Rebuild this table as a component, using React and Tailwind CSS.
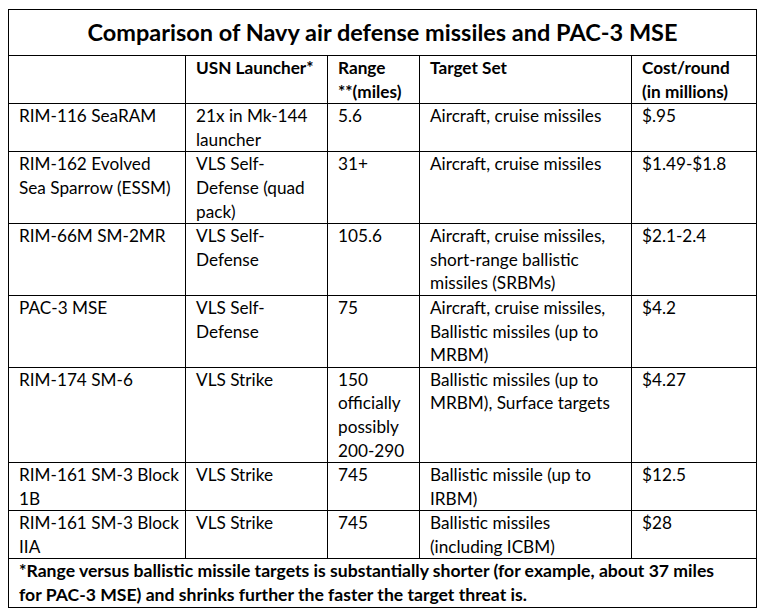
const rows = [
  {
    name: ['RIM-116 SeaRAM'],
    launcher: ['21x in Mk-144', 'launcher'],
    range: ['5.6'],
    targets: ['Aircraft, cruise missiles'],
    cost: '$.95',
  },
  {
    name: ['RIM-162 Evolved', 'Sea Sparrow (ESSM)'],
    launcher: ['VLS Self-', 'Defense (quad', 'pack)'],
    range: ['31+'],
    targets: ['Aircraft, cruise missiles'],
    cost: '$1.49-$1.8',
  },
  {
    name: ['RIM-66M SM-2MR'],
    launcher: ['VLS Self-', 'Defense'],
    range: ['105.6'],
    targets: ['Aircraft, cruise missiles,', 'short-range ballistic', 'missiles (SRBMs)'],
    cost: '$2.1-2.4',
  },
  {
    name: ['PAC-3 MSE'],
    launcher: ['VLS Self-', 'Defense'],
    range: ['75'],
    targets: ['Aircraft, cruise missiles,', 'Ballistic missiles (up to', 'MRBM)'],
    cost: '$4.2',
  },
  {
    name: ['RIM-174 SM-6'],
    launcher: ['VLS Strike'],
    range: ['150', 'officially', 'possibly', '200-290'],
    targets: ['Ballistic missiles (up to', 'MRBM), Surface targets'],
    cost: '$4.27',
  },
  {
    name: ['RIM-161 SM-3 Block', '1B'],
    launcher: ['VLS Strike'],
    range: ['745'],
    targets: ['Ballistic missile (up to', 'IRBM)'],
    cost: '$12.5',
  },
  {
    name: ['RIM-161 SM-3 Block', 'IIA'],
    launcher: ['VLS Strike'],
    range: ['745'],
    targets: ['Ballistic missiles', '(including ICBM)'],
    cost: '$28',
  },
];

const Lines = ({ lines }) =>
  lines.map((line, i) => (
    <div key={i} className="whitespace-nowrap">
      {line}
    </div>
  ));

const cell = 'border border-black align-top pl-[10px] pr-1 py-0';

export default function App() {
  return (
    <div className="min-h-screen bg-white pt-[9px] pl-2 text-black font-['Lato',sans-serif] text-[17.2px] leading-[23.6px]">
      <table className="table-fixed border-collapse w-[748px]">
        <colgroup>
          <col className="w-[177px]" />
          <col className="w-[142px]" />
          <col className="w-[92px]" />
          <col className="w-[212px]" />
          <col className="w-[125px]" />
        </colgroup>
        <tbody>
          {/* Title row */}
          <tr>
            <td
              colSpan={5}
              className="border border-black h-[46px] text-center font-bold text-[23.5px] leading-[45px]"
            >
              Comparison of Navy air defense missiles and PAC-3 MSE
            </td>
          </tr>

          {/* Column headers */}
          <tr className="font-bold">
            <td className={cell}></td>
            <td className={cell}>USN Launcher*</td>
            <td className={cell}>
              <Lines lines={['Range', '**(miles)']} />
            </td>
            <td className={cell}>Target Set</td>
            <td className={cell}>
              <Lines lines={['Cost/round', '(in millions)']} />
            </td>
          </tr>

          {rows.map((row, i) => (
            <tr key={i}>
              <td className={cell}>
                <Lines lines={row.name.length > 1 ? row.name : [...row.name, '\u00a0']} />
              </td>
              <td className={cell}>
                <Lines lines={row.launcher} />
              </td>
              <td className={cell}>
                <Lines lines={row.range} />
              </td>
              <td className={cell}>
                <Lines lines={row.targets} />
              </td>
              <td className={cell}>{row.cost}</td>
            </tr>
          ))}

          {/* Footnote */}
          <tr className="font-bold text-[17.6px]">
            <td colSpan={5} className={cell}>
              <Lines
                lines={[
                  '*Range versus ballistic missile targets is substantially shorter (for example, about 37 miles',
                  'for PAC-3 MSE) and shrinks further the faster the target threat is.',
                ]}
              />
            </td>
          </tr>
        </tbody>
      </table>
    </div>
  );
}
